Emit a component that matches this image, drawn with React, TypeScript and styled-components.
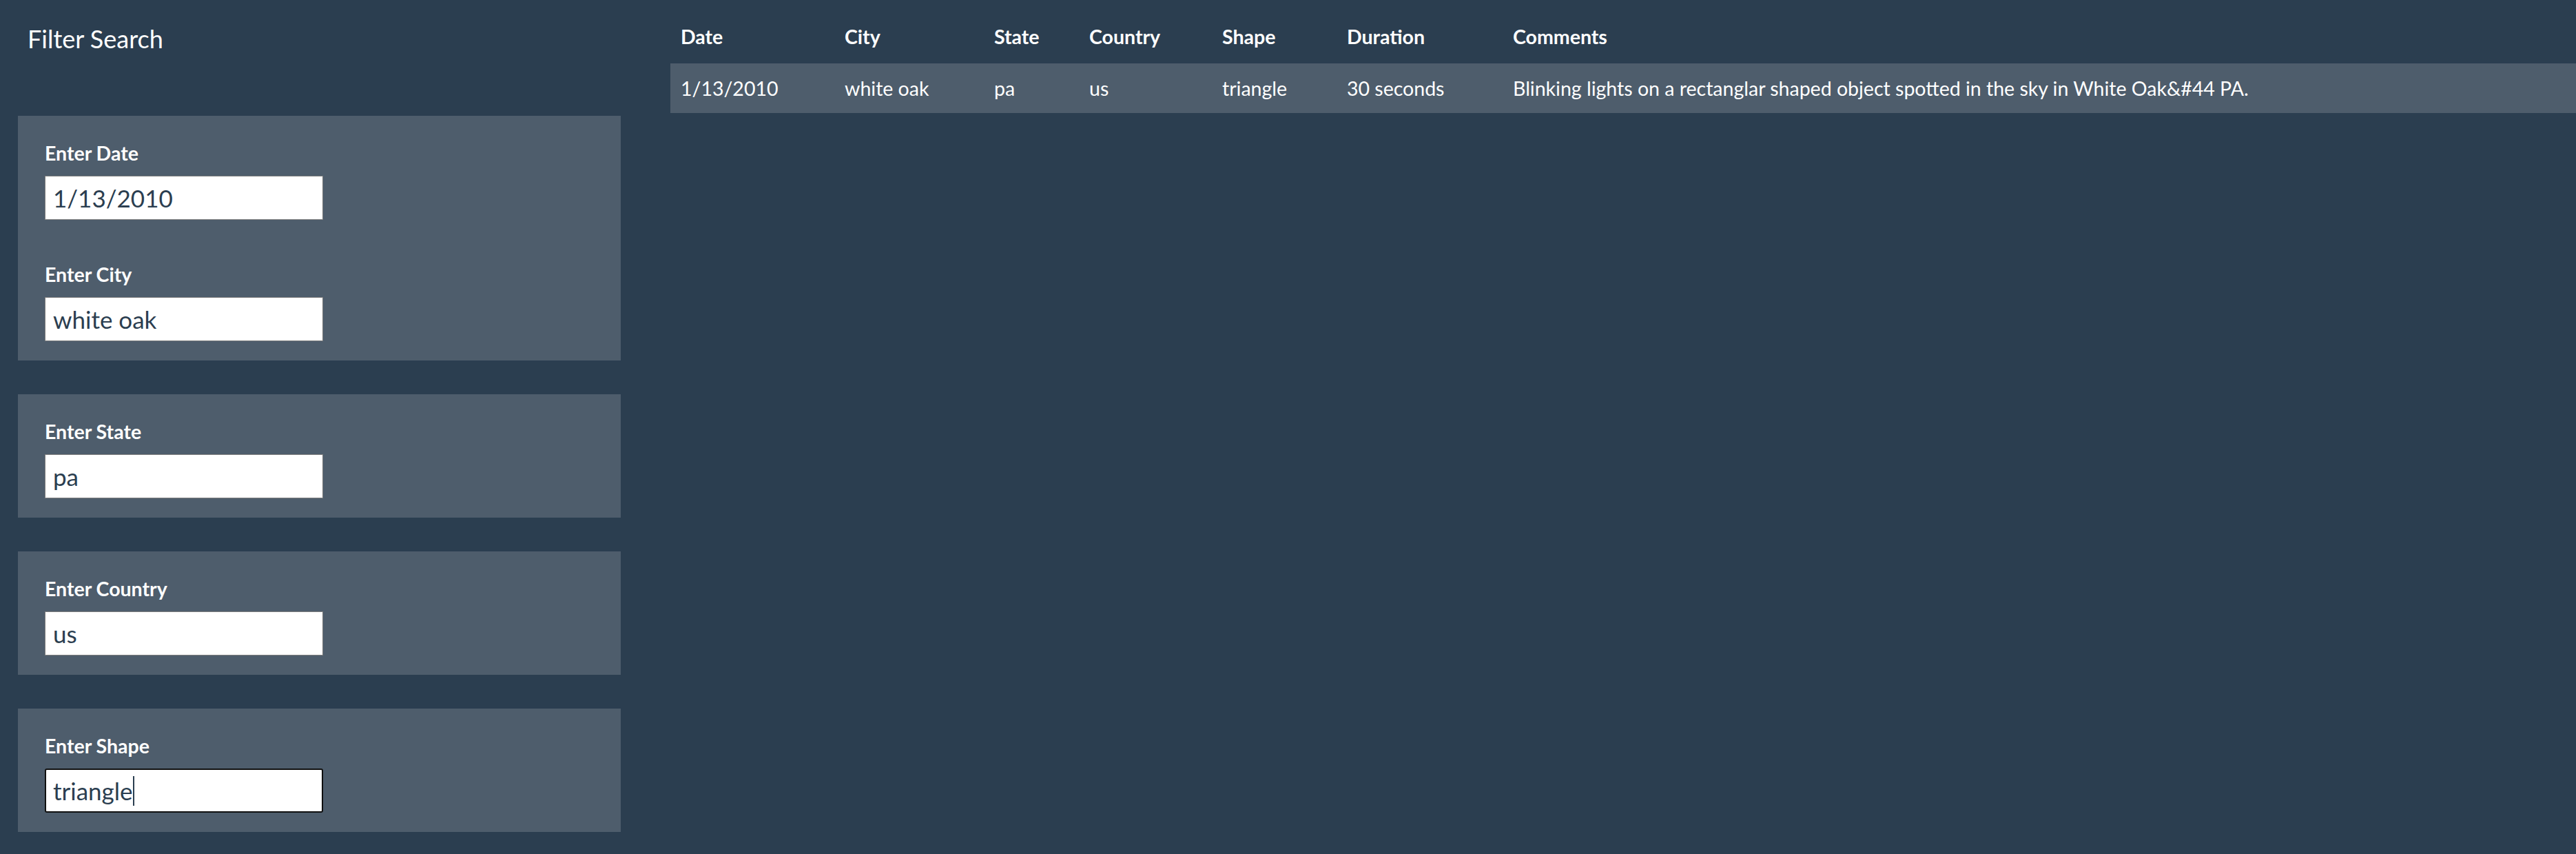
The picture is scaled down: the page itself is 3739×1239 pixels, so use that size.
import React from 'react';
import styled, { createGlobalStyle } from 'styled-components';

const GlobalStyle = createGlobalStyle`
  html, body {
    margin: 0;
    padding: 0;
    background: #2b3e50;
  }
  body {
    font-family: Lato, "Liberation Sans", sans-serif;
    color: #ffffff;
  }
  *, *::before, *::after {
    box-sizing: border-box;
  }
`;

const Page = styled.div`
  display: grid;
  grid-template-columns: 947px 1fr;
  min-height: 100vh;
  background: #2b3e50;
`;

const Sidebar = styled.aside`
  display: flex;
  flex-direction: column;
  gap: 49px;
  padding: 37px 0 0 26px;
`;

const Title = styled.h4`
  margin: 0 0 43px 14px;
  font-size: 36px;
  font-weight: 400;
  line-height: 39px;
  color: #ffffff;
`;

const Panel = styled.section`
  width: 875px;
  background: #4e5d6c;
  padding: 33px 39px 28px;
  display: flex;
  flex-direction: column;
  gap: 58px;
`;

const Field = styled.div`
  display: flex;
  flex-direction: column;
  align-items: flex-start;
  gap: 12px;
`;

const Label = styled.label`
  font-size: 28.5px;
  font-weight: 700;
  line-height: 42px;
  color: #ffffff;
`;

const InputWrap = styled.div`
  position: relative;
  width: 404px;
  height: 64px;
`;

const Input = styled.input<{ $focused?: boolean }>`
  display: block;
  width: 100%;
  height: 100%;
  margin: 0;
  background: #ffffff;
  color: #2b3e50;
  font-family: Lato, "Liberation Sans", sans-serif;
  font-size: 35px;
  border: ${p => (p.$focused ? '2px solid #101010' : '1px solid #7d7d7d')};
  border-radius: ${p => (p.$focused ? '3px' : '0')};
  padding: 0 0 0 ${p => (p.$focused ? '10px' : '11px')};
  outline: none;
  caret-color: transparent;
`;

const CaretLayer = styled.div`
  position: absolute;
  inset: 0;
  display: flex;
  align-items: center;
  padding-left: 12px;
  pointer-events: none;
  font-family: Lato, "Liberation Sans", sans-serif;
  font-size: 35px;
`;

const Ghost = styled.span`
  visibility: hidden;
  white-space: pre;
`;

const Caret = styled.span`
  display: block;
  width: 2px;
  height: 43px;
  background: #2b3e50;
`;

const Main = styled.main`
  padding: 17px 0 0 26px;
  min-width: 0;
`;

const Table = styled.table`
  width: 100%;
  border-collapse: collapse;
  table-layout: fixed;
  font-size: 28.5px;
`;

const Col = styled.col<{ $w?: number }>`
  width: ${p => (p.$w ? `${p.$w}px` : 'auto')};
`;

const Th = styled.th`
  text-align: left;
  font-weight: 700;
  padding: 15px 15px 18px;
  line-height: 42px;
  color: #ffffff;
  white-space: nowrap;
`;

const Row = styled.tr<{ $striped: boolean }>`
  background: ${p => (p.$striped ? '#4e5d6c' : 'transparent')};
`;

const Td = styled.td`
  padding: 15px;
  line-height: 42px;
  font-weight: 400;
  color: #ffffff;
  white-space: nowrap;
`;

type Sighting = {
  date: string;
  city: string;
  state: string;
  country: string;
  shape: string;
  duration: string;
  comments: string;
};

const columns: { key: keyof Sighting; title: string; width?: number }[] = [
  { key: 'date', title: 'Date', width: 238 },
  { key: 'city', title: 'City', width: 217 },
  { key: 'state', title: 'State', width: 138 },
  { key: 'country', title: 'Country', width: 193 },
  { key: 'shape', title: 'Shape', width: 181 },
  { key: 'duration', title: 'Duration', width: 241 },
  { key: 'comments', title: 'Comments' },
];

const data: Sighting[] = [
  {
    date: '1/13/2010',
    city: 'white oak',
    state: 'pa',
    country: 'us',
    shape: 'triangle',
    duration: '30 seconds',
    comments:
      'Blinking lights on a rectanglar shaped object spotted in the sky in White Oak&#44 PA.',
  },
];

type FilterDef = { id: string; label: string; value: string; focused?: boolean };

const panels: FilterDef[][] = [
  [
    { id: 'datetime', label: 'Enter Date', value: '1/13/2010' },
    { id: 'city', label: 'Enter City', value: 'white oak' },
  ],
  [{ id: 'state', label: 'Enter State', value: 'pa' }],
  [{ id: 'country', label: 'Enter Country', value: 'us' }],
  [{ id: 'shape', label: 'Enter Shape', value: 'triangle', focused: true }],
];

function FilterField({ def }: { def: FilterDef }) {
  return (
    <Field>
      <Label htmlFor={def.id}>{def.label}</Label>
      <InputWrap>
        <Input
          id={def.id}
          type="text"
          defaultValue={def.value}
          spellCheck={false}
          $focused={def.focused}
        />
        {def.focused && (
          <CaretLayer>
            <Ghost>{def.value}</Ghost>
            <Caret />
          </CaretLayer>
        )}
      </InputWrap>
    </Field>
  );
}

export default function App() {
  return (
    <>
      <GlobalStyle />
      <Page>
        <Sidebar>
          <Title>Filter Search</Title>
          {panels.map((group, i) => (
            <Panel key={i}>
              {group.map(def => (
                <FilterField key={def.id} def={def} />
              ))}
            </Panel>
          ))}
        </Sidebar>
        <Main>
          <Table>
            <colgroup>
              {columns.map(c => (
                <Col key={c.key} $w={c.width} />
              ))}
            </colgroup>
            <thead>
              <tr>
                {columns.map(c => (
                  <Th key={c.key}>{c.title}</Th>
                ))}
              </tr>
            </thead>
            <tbody>
              {data.map((row, i) => (
                <Row key={i} $striped={i % 2 === 0}>
                  {columns.map(c => (
                    <Td key={c.key}>{row[c.key]}</Td>
                  ))}
                </Row>
              ))}
            </tbody>
          </Table>
        </Main>
      </Page>
    </>
  );
}
